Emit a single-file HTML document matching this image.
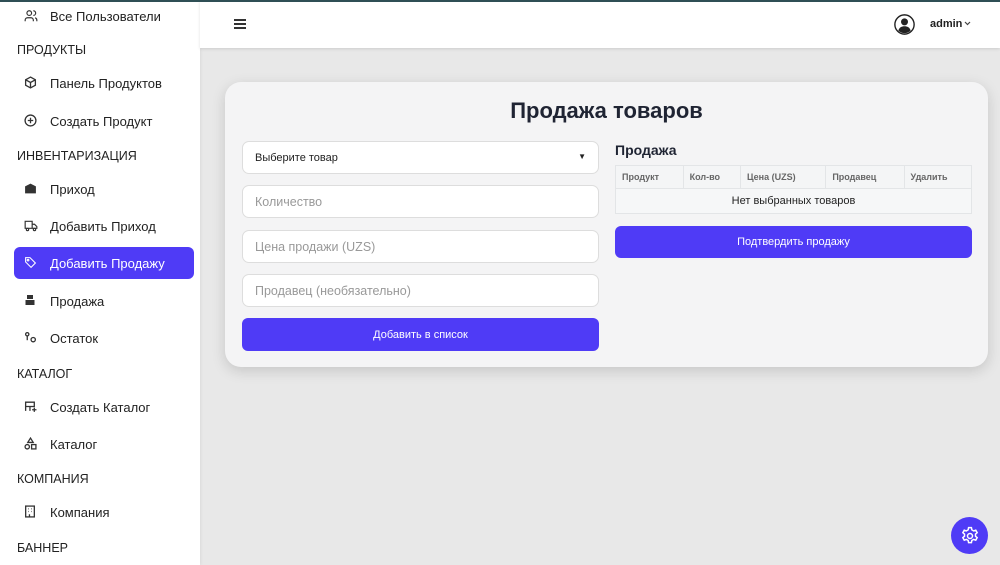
<!DOCTYPE html>
<html><head><meta charset="utf-8"><style>
*{box-sizing:border-box;margin:0;padding:0}
body{width:1000px;height:565px;overflow:hidden;background:#e8e8e8;font-family:"Liberation Sans","DejaVu Sans",sans-serif;position:relative;color:#222}
.topline{position:absolute;left:0;top:0;width:1000px;height:2px;background:#2f4f55;z-index:5}
.side{position:absolute;left:0;top:0;width:200px;height:565px;background:#fff;box-shadow:1px 0 3px rgba(0,0,0,.06)}
.it{position:absolute;left:14px;width:180px;height:32px;border-radius:6px;font-size:13px;color:#222;display:flex;align-items:center;padding-left:36px}
.it svg{position:absolute;left:10px;top:9px}
.it.act{background:#4f3bf6;color:#fff}
.sec{position:absolute;left:17px;font-size:12.5px;color:#222}
.hdr{position:absolute;left:200px;top:0;width:800px;height:48px;background:#fff;box-shadow:0 1px 3px rgba(0,0,0,.12)}
.card{position:absolute;left:225px;top:82px;width:763px;height:285px;background:#f4f4f5;border-radius:16px;box-shadow:0 4px 14px rgba(0,0,0,.15)}
h1{position:absolute;left:0;width:763px;top:16px;text-align:center;font-size:22px;font-weight:bold;color:#1f2433}
.f{position:absolute;left:17px;width:357px;height:33px;background:#fff;border:1px solid #ddd;border-radius:7px;font-size:12.5px;color:#999;padding-left:12px;display:flex;align-items:center}
.btn{position:absolute;background:#4f3bf6;color:#fff;border-radius:6px;font-size:11px;display:flex;align-items:center;justify-content:center;height:33px}
table{position:absolute;left:390px;top:83px;width:357px;border-collapse:collapse;font-size:9px}
td,th{border:1px solid #e3e5e7;height:23px}
th{color:#666;text-align:left;padding-left:6px;font-weight:bold;background:#f4f5f6}
td{text-align:center;font-size:11px;color:#222;height:25px;background:#f6f7f8}
</style></head><body>
<div class="topline"></div>
<div class="side">
<div class="it" style="top:0"><svg width="14" height="14" viewBox="0 0 24 24" fill="none" stroke="#333" stroke-width="2"><circle cx="9" cy="7" r="4"/><path d="M2 21v-2a4 4 0 0 1 4-4h6a4 4 0 0 1 4 4v2M16 3a4 4 0 0 1 0 8M22 21v-2a4 4 0 0 0-3-3.8"/></svg>Все Пользователи</div>
<div class="sec" style="top:43px">ПРОДУКТЫ</div>
<div class="it" style="top:67px"><svg width="13" height="13" viewBox="0 0 24 24" fill="none" stroke="#333" stroke-width="2.4"><path d="M12 2l9 5v10l-9 5-9-5V7z M3 7l9 5 9-5M12 12v10"/></svg>Панель Продуктов</div>
<div class="it" style="top:105px"><svg width="13" height="13" viewBox="0 0 24 24" fill="none" stroke="#333" stroke-width="2.4"><circle cx="12" cy="12" r="10"/><path d="M12 7v10M7 12h10"/></svg>Создать Продукт</div>
<div class="sec" style="top:149px">ИНВЕНТАРИЗАЦИЯ</div>
<div class="it" style="top:173px"><svg width="13" height="13" viewBox="0 0 24 24" fill="#333"><path d="M2 8l10-5 10 5v13H2z"/></svg>Приход</div>
<div class="it" style="top:210px"><svg width="14" height="14" viewBox="0 0 24 24" fill="none" stroke="#333" stroke-width="2"><path d="M2 4h12v12H2zM14 9h4l4 4v3h-8"/><circle cx="6" cy="18" r="2"/><circle cx="18" cy="18" r="2"/></svg>Добавить Приход</div>
<div class="it act" style="top:247px"><svg width="13" height="13" viewBox="0 0 24 24" fill="none" stroke="#fff" stroke-width="2"><path d="M3 3h8l10 10-8 8L3 11z"/><circle cx="7.5" cy="7.5" r="1.5"/></svg>Добавить Продажу</div>
<div class="it" style="top:285px"><svg width="12" height="12" viewBox="0 0 24 24" fill="#333"><path d="M6 2h12v8H6zM3 12h18v10H3z"/></svg>Продажа</div>
<div class="it" style="top:322px"><svg width="13" height="13" viewBox="0 0 24 24" fill="none" stroke="#333" stroke-width="2.4"><circle cx="6" cy="6" r="3"/><circle cx="17" cy="16" r="4"/><path d="M6 9v8"/></svg>Остаток</div>
<div class="sec" style="top:367px">КАТАЛОГ</div>
<div class="it" style="top:391px"><svg width="13" height="13" viewBox="0 0 24 24" fill="none" stroke="#333" stroke-width="2.4"><path d="M3 4h16v8H3zM3 12v8M11 12v8M19 14v8M15 18h8"/></svg>Создать Каталог</div>
<div class="it" style="top:428px"><svg width="13" height="13" viewBox="0 0 24 24" fill="none" stroke="#333" stroke-width="2.4"><path d="M12 2l5 8H7z"/><circle cx="6" cy="18" r="4"/><rect x="14" y="14" width="8" height="8"/></svg>Каталог</div>
<div class="sec" style="top:472px">КОМПАНИЯ</div>
<div class="it" style="top:496px"><svg width="12" height="13" viewBox="0 0 20 24" fill="none" stroke="#333" stroke-width="2.4"><rect x="2" y="2" width="16" height="20"/><path d="M7 7h1M12 7h1M7 12h1M12 12h1M9 17v5"/></svg>Компания</div>
<div class="sec" style="top:541px">БАННЕР</div>
</div>
<div class="hdr">
<div style="position:absolute;left:34px;top:19px;width:12px;height:1.5px;background:#333;box-shadow:0 4px 0 #333,0 8px 0 #333"></div>
<svg style="position:absolute;left:694px;top:14px" width="21" height="21" viewBox="0 0 24 24"><circle cx="12" cy="12" r="11" fill="none" stroke="#222" stroke-width="1.6"/><circle cx="12" cy="9" r="4" fill="#222"/><path d="M5 19c1-4 4-5 7-5s6 1 7 5a10 10 0 0 1-14 0z" fill="#222"/></svg>
<div style="position:absolute;left:730px;top:18px;font-size:11px;font-weight:bold;color:#222">admin</div>
<svg style="position:absolute;left:764px;top:21px" width="7" height="5" viewBox="0 0 7 5"><path d="M1 1l2.5 2.5L6 1" fill="none" stroke="#444" stroke-width="1.2"/></svg>
</div>
<div class="card">
<h1>Продажа товаров</h1>
<div class="f" style="top:59px;color:#222;font-size:11px">Выберите товар<span style="position:absolute;right:12px;top:10px;font-size:8px">&#9660;</span></div>
<div class="f" style="top:103px">Количество</div>
<div class="f" style="top:148px">Цена продажи (UZS)</div>
<div class="f" style="top:192px">Продавец (необязательно)</div>
<div class="btn" style="left:17px;top:236px;width:357px">Добавить в список</div>
<div style="position:absolute;left:390px;top:60px;font-size:14px;font-weight:bold;color:#1f2433">Продажа</div>
<table><tr><th>Продукт</th><th>Кол-во</th><th>Цена (UZS)</th><th>Продавец</th><th>Удалить</th></tr>
<tr><td colspan="5">Нет выбранных товаров</td></tr></table>
<div class="btn" style="left:390px;top:144px;width:357px;height:32px">Подтвердить продажу</div>
</div>
<div style="position:absolute;left:951px;top:517px;width:37px;height:37px;border-radius:50%;background:#4f3bf6;display:flex;align-items:center;justify-content:center">
<svg width="20" height="20" viewBox="0 0 24 24" fill="none" stroke="#fff" stroke-width="1.8"><circle cx="12" cy="12" r="3"/><path d="M10.3 2h3.4l.5 2.6 2.2 1.3 2.5-.9 1.7 3-2 1.7v2.6l2 1.7-1.7 3-2.5-.9-2.2 1.3-.5 2.6h-3.4l-.5-2.6-2.2-1.3-2.5.9-1.7-3 2-1.7V9.7l-2-1.7 1.7-3 2.5.9 2.2-1.3z"/></svg>
</div>
</body></html>
